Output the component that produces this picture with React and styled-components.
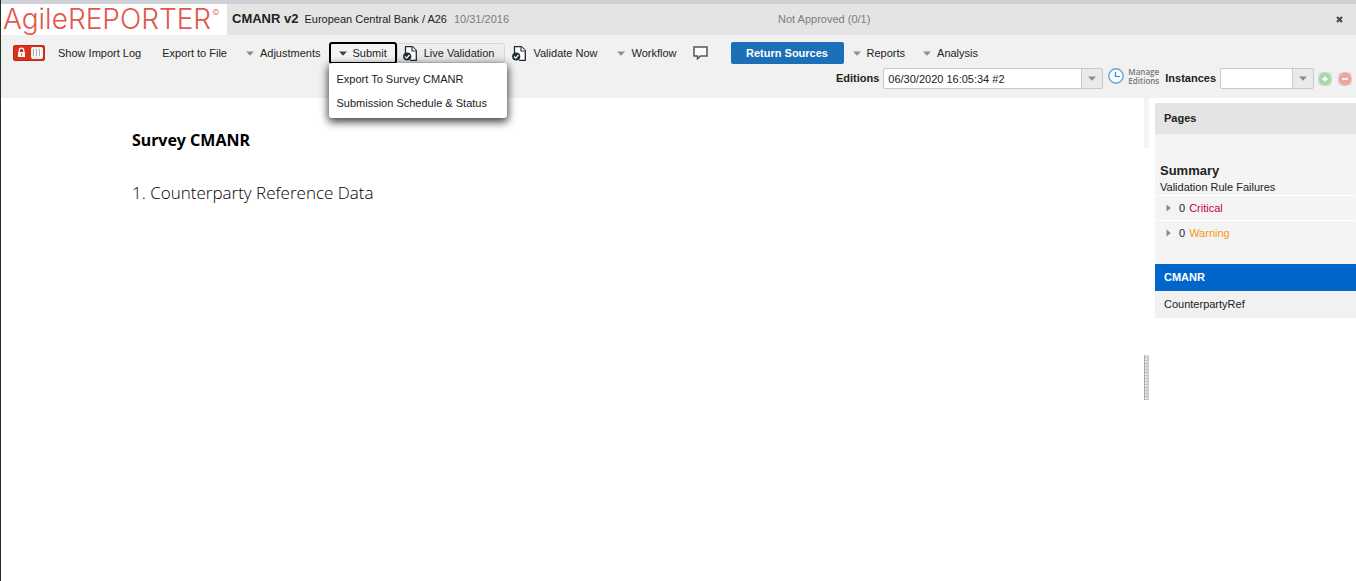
import React from "react";
import styled, { createGlobalStyle, css } from "styled-components";

const Global = createGlobalStyle`
  * { box-sizing: border-box; }
  body { margin: 0; background: #fff; }
  body, button, select { font-family: "Liberation Sans", Arial, sans-serif; font-size: 11px; color: #222; }
  h1, h2, h3, p, ul { margin: 0; padding: 0; }
  ul { list-style: none; }
  a { color: inherit; text-decoration: none; }
`;

const Page = styled.div`
  display: flex;
  flex-direction: column;
  min-height: 100vh;
  border-left: 1px solid #1c3524;
`;

const Header = styled.header`
  display: flex;
  align-items: center;
  height: 35px;
  border-top: 4px solid #d0d1d6;
  background: #e4e4e4;
  white-space: nowrap;
`;

const Logo = styled.div`
  display: flex;
  align-self: stretch;
  width: 226px;
  padding-left: 2px;
  background: #fff;
  color: #e2574c;
  font-family: Inter, sans-serif;
  font-size: 28px;
  font-weight: 300;
  line-height: 30px;
`;

const Mark = styled.span`
  padding-left: 1px;
  font-size: 8px;
  line-height: 17px;
`;

const Title = styled.h1`
  padding: 0 6px 2px 5px;
  font-size: 13px;
  line-height: 18px;
  font-weight: bold;
`;

const Entity = styled.span`
  padding: 0 7px 2px 0;
`;

const Muted = styled.span`
  padding-bottom: 2px;
  color: #7d7d7d;
`;

const Status = styled(Muted)`
  flex: 1;
  padding-left: 269px;
`;

const Close = styled.button`
  display: flex;
  padding: 5px 13px;
  border: 0;
  background: none;
`;

const Toolbar = styled.div`
  display: flex;
  flex-direction: column;
  gap: 4px;
  padding: 7px 4px 9px 0;
  background: #f1f1f1;
`;

const Actions = styled.div`
  display: flex;
  align-items: center;
  height: 22px;
  padding-left: 12px;
`;

const Lock = styled.button`
  display: flex;
  margin-right: 3px;
  padding: 0;
  border: 0;
  background: none;
`;

const Action = styled.button`
  display: flex;
  align-items: center;
  flex: none;
  gap: ${(p) => (p.$icon ? 7 : 6)}px;
  height: 22px;
  padding: 0 ${(p) => p.$pad ?? 9}px;
  border: 0;
  border-radius: 3px;
  background: none;
  white-space: nowrap;
  ${(p) =>
    p.$open &&
    css`
      padding: 0 8px;
      border: 2px solid #000;
      background: #f4f4f4;
    `}
  ${(p) =>
    p.$pressed &&
    css`
      height: 20px;
      padding: 0 10px 0 5px;
      border: 1px solid #d6d6d6;
      background: linear-gradient(#f0f0f0, #e6e6e6);
    `}
`;

const Group = styled.div`
  display: flex;
  align-items: center;
  margin-left: 4px;
`;

const Primary = styled.button`
  flex: none;
  width: 113px;
  height: 22px;
  margin-left: 16px;
  padding: 0;
  border: 0;
  border-radius: 2px;
  background: #1d70b8;
  color: #fff;
  font-weight: bold;
`;

const MenuAnchor = styled.div`
  position: relative;
`;

const Menu = styled.ul`
  position: absolute;
  z-index: 2;
  top: 21px;
  left: 0;
  width: 178px;
  padding: 4px 0 3px;
  border-radius: 3px;
  background: #fff;
  box-shadow: 0 3px 8px 1px rgba(0, 0, 0, 0.75);
`;

const MenuLink = styled.a`
  display: block;
  padding: 0 8px;
  line-height: 24px;
  white-space: nowrap;
`;

const Filters = styled.div`
  display: flex;
  align-items: center;
  justify-content: flex-end;
  height: 21px;
`;

const Label = styled.label`
  padding: 0 4px 2px 6px;
  font-weight: bold;
`;

const Combo = styled.div`
  display: grid;
  width: ${(p) => p.$width}px;
  height: 21px;
  border: 1px solid #c8c8c8;
  border-radius: 2px;
  overflow: hidden;
  background: linear-gradient(to left, #eaeaea 20px, #c8c8c8 20px, #c8c8c8 21px, #fff 21px);
`;

const Select = styled.select`
  grid-area: 1 / 1;
  width: 100%;
  padding: 0 24px 0 4px;
  border: 0;
  background: none;
  appearance: none;
`;

const ComboArrow = styled.span`
  grid-area: 1 / 1;
  display: flex;
  align-self: center;
  justify-self: end;
  padding-right: 6px;
  pointer-events: none;
`;

const Manage = styled.button`
  display: flex;
  align-items: center;
  gap: 4px;
  padding: 0 0 5px 5px;
  border: 0;
  background: none;
  color: #777;
  font-family: "Open Sans", sans-serif;
  font-size: 8px;
  font-weight: 600;
  line-height: 9px;
  text-align: left;
`;

const Round = styled.button`
  display: flex;
  padding: 0;
  margin-left: ${(p) => p.$gap}px;
  border: 0;
  background: none;
`;

const Body = styled.div`
  display: flex;
  flex: 1;
`;

const Survey = styled.main`
  flex: 1;
  padding: 30px 131px;
  color: #000;
`;

const SurveyTitle = styled.h2`
  font-family: "Noto Sans", sans-serif;
  font-size: 16px;
  line-height: 24px;
`;

const SurveyLink = styled.a`
  display: block;
  padding-top: 29px;
  font-family: "Open Sans", sans-serif;
  font-size: 17px;
  font-weight: 340;
  line-height: 24px;
`;

const Splitter = styled.div`
  width: 5px;
  margin-right: 6px;
`;

const SplitTrack = styled.div`
  height: 50px;
  background: #f4f4f4;
`;

const SplitHandle = styled.div`
  height: 45px;
  margin-top: 207px;
  border-left: 1px solid #aaa;
  border-right: 2px solid #ccc;
  background: repeating-linear-gradient(#e8e8e8 0 2px, #bbb 2px 3px);
`;

const Side = styled.aside`
  width: 201px;
  padding-top: 5px;
`;

const SideHead = styled.h2`
  padding: 0 9px;
  background: #e4e4e4;
  font-size: 11px;
  line-height: 31px;
`;

const Summary = styled.section`
  padding: 28px 0 19px;
  background: #f4f4f4;
`;

const SummaryTitle = styled.h3`
  padding-left: 5px;
  font-size: 13px;
  line-height: 18px;
`;

const SummaryText = styled.p`
  padding-left: 5px;
  line-height: 15px;
`;

const Failure = styled.button`
  display: flex;
  align-items: center;
  width: 100%;
  height: 25px;
  padding: 0 11px;
  border: 0;
  border-top: 1px solid #fff;
  border-radius: 3px;
  background: #f4f4f4;
`;

const Count = styled.span`
  padding: 0 4px 0 8px;
`;

const Kind = styled.span`
  color: ${(p) => p.$color};
`;

const PageLink = styled.a`
  display: block;
  padding: 0 9px;
  background: ${(p) => (p.$active ? "#0066cc" : "#f1f1f1")};
  color: ${(p) => (p.$active ? "#fff" : "#222")};
  font-weight: ${(p) => (p.$active ? "bold" : "normal")};
  line-height: 27px;
`;

const Down = ({ color = "#8c8c8c" }) => (
  <svg width="8" height="5" viewBox="0 0 8 5" aria-hidden="true">
    <path d="M0 0.5H8L4 4.7Z" fill={color} />
  </svg>
);

const RightArrow = () => (
  <svg width="5" height="8" viewBox="0 0 5 8" aria-hidden="true">
    <path d="M0.5 0.5L4.7 4L0.5 7.5Z" fill="#888" />
  </svg>
);

const LockSwitch = () => (
  <svg width="32" height="16" viewBox="0 0 32 16" aria-hidden="true">
    <rect x="0.5" y="0.5" width="31" height="15" rx="1.5" fill="#dc3018" stroke="#b92a17" />
    <rect x="5" y="7" width="7" height="5" fill="#fff" />
    <path d="M6.2 7V5.5a2.3 2.3 0 0 1 4.6 0V7" fill="none" stroke="#fff" strokeWidth="1.2" />
    <path d="M8.5 8.5v2" stroke="#dc3018" />
    <rect x="18" y="2" width="12" height="12" rx="2" fill="#eef1f3" />
    <path d="M20.5 4v7M23.5 4v7M26.5 4v7" stroke="#9db7c9" />
    <path d="M21.5 4v7.5M24.5 4v7.5M27.5 4v7.5" stroke="#fff" />
  </svg>
);

const ValidateIcon = () => (
  <svg width="14" height="15" viewBox="0 0 14 15" aria-hidden="true">
    <path d="M2.5 7V0.7H9.5L13.3 4.5V14.3H7" fill="#fff" stroke="#222b2e" strokeWidth="1.3" />
    <path d="M9 0.5V5H13.5" fill="#fff" stroke="#433544" strokeWidth="1.2" />
    <circle cx="4.2" cy="10.5" r="4.1" fill="#1f2f35" />
    <path d="M2 10.5L3.7 12.1L6.5 9" fill="none" stroke="#fff" strokeWidth="1.2" />
  </svg>
);

const Comment = () => (
  <svg width="15" height="14" viewBox="0 0 15 14" aria-hidden="true">
    <path d="M1 1H14V10H7.5L4.5 12.8V10H1Z" fill="#fafafa" stroke="#555" strokeWidth="1.5" />
  </svg>
);

const Clock = () => (
  <svg width="16" height="16" viewBox="0 0 16 16" aria-hidden="true">
    <circle cx="8" cy="8" r="7.2" fill="#f8fbfd" stroke="#63a6d6" strokeWidth="1.4" />
    <path d="M7.5 4V8.5H12" fill="none" stroke="#3288c5" strokeWidth="1.2" />
  </svg>
);

const RoundIcon = ({ color, plus }) => (
  <svg width="14" height="14" viewBox="0 0 14 14" aria-hidden="true">
    <rect width="14" height="14" rx="2" fill="#e6e6e6" />
    <circle cx="7" cy="7" r="6.7" fill={color} />
    <path d={plus ? "M4.5 7H9.5M7 4.5V9.5" : "M4 7H10"} stroke="#fff" strokeWidth="1.8" />
  </svg>
);

const Cross = () => (
  <svg width="7" height="7" viewBox="0 0 7 7" aria-hidden="true">
    <path d="M1 1L6 6M6 1L1 6" stroke="#444" strokeWidth="2.1" />
  </svg>
);

const DropAction = ({ children, pad }) => (
  <Action $pad={pad} aria-haspopup="menu">
    <Down />
    {children}
  </Action>
);

export default function App() {
  return (
    <Page>
      <Global />
      <Header>
        <Logo>
          AgileREPORTER<Mark>©</Mark>
        </Logo>
        <Title>CMANR v2</Title>
        <Entity>European Central Bank / A26</Entity>
        <Muted>10/31/2016</Muted>
        <Status>Not Approved (0/1)</Status>
        <Close aria-label="Close"><Cross /></Close>
      </Header>

      <Toolbar>
        <Actions>
          <Lock aria-label="Lock"><LockSwitch /></Lock>
          <Action $pad={10}>Show Import Log</Action>
          <Action $pad={11}>Export to File</Action>
          <DropAction pad={8}>Adjustments</DropAction>
          <MenuAnchor>
            <Action $open aria-haspopup="menu" aria-expanded="true">
              <Down color="#444" />
              Submit
            </Action>
            <Menu>
              <li><MenuLink href="#export">Export To Survey CMANR</MenuLink></li>
              <li><MenuLink href="#schedule">Submission Schedule &amp; Status</MenuLink></li>
            </Menu>
          </MenuAnchor>
          <Action $icon $pressed aria-pressed="true"><ValidateIcon />Live Validation</Action>
          <Action $icon $pad={7}><ValidateIcon />Validate Now</Action>
          <Group>
            <DropAction>Workflow</DropAction>
            <Action $pad={7} aria-label="Comments"><Comment /></Action>
          </Group>
          <Primary>Return Sources</Primary>
          <DropAction>Reports</DropAction>
          <DropAction>Analysis</DropAction>
        </Actions>
        <Filters>
          <Label htmlFor="editions">Editions</Label>
          <Combo $width={220}>
            <Select id="editions"><option>06/30/2020 16:05:34 #2</option></Select>
            <ComboArrow><Down /></ComboArrow>
          </Combo>
          <Manage><Clock /><span>Manage<br />Editions</span></Manage>
          <Label htmlFor="instances">Instances</Label>
          <Combo $width={94}>
            <Select id="instances"><option></option></Select>
            <ComboArrow><Down /></ComboArrow>
          </Combo>
          <Round $gap={4} aria-label="Add instance"><RoundIcon color="#acd8ae" plus /></Round>
          <Round $gap={6} aria-label="Remove instance"><RoundIcon color="#eda79b" /></Round>
        </Filters>
      </Toolbar>

      <Body>
        <Survey>
          <SurveyTitle>Survey CMANR</SurveyTitle>
          <SurveyLink href="#counterparty">1. Counterparty Reference Data</SurveyLink>
        </Survey>
        <Splitter>
          <SplitTrack />
          <SplitHandle />
        </Splitter>
        <Side>
          <SideHead>Pages</SideHead>
          <Summary>
            <SummaryTitle>Summary</SummaryTitle>
            <SummaryText>Validation Rule Failures</SummaryText>
            <Failure><RightArrow /><Count>0</Count><Kind $color="#c8003c">Critical</Kind></Failure>
            <Failure><RightArrow /><Count>0</Count><Kind $color="#f39a12">Warning</Kind></Failure>
          </Summary>
          <nav>
            <PageLink $active href="#cmanr">CMANR</PageLink>
            <PageLink href="#counterpartyref">CounterpartyRef</PageLink>
          </nav>
        </Side>
      </Body>
    </Page>
  );
}
